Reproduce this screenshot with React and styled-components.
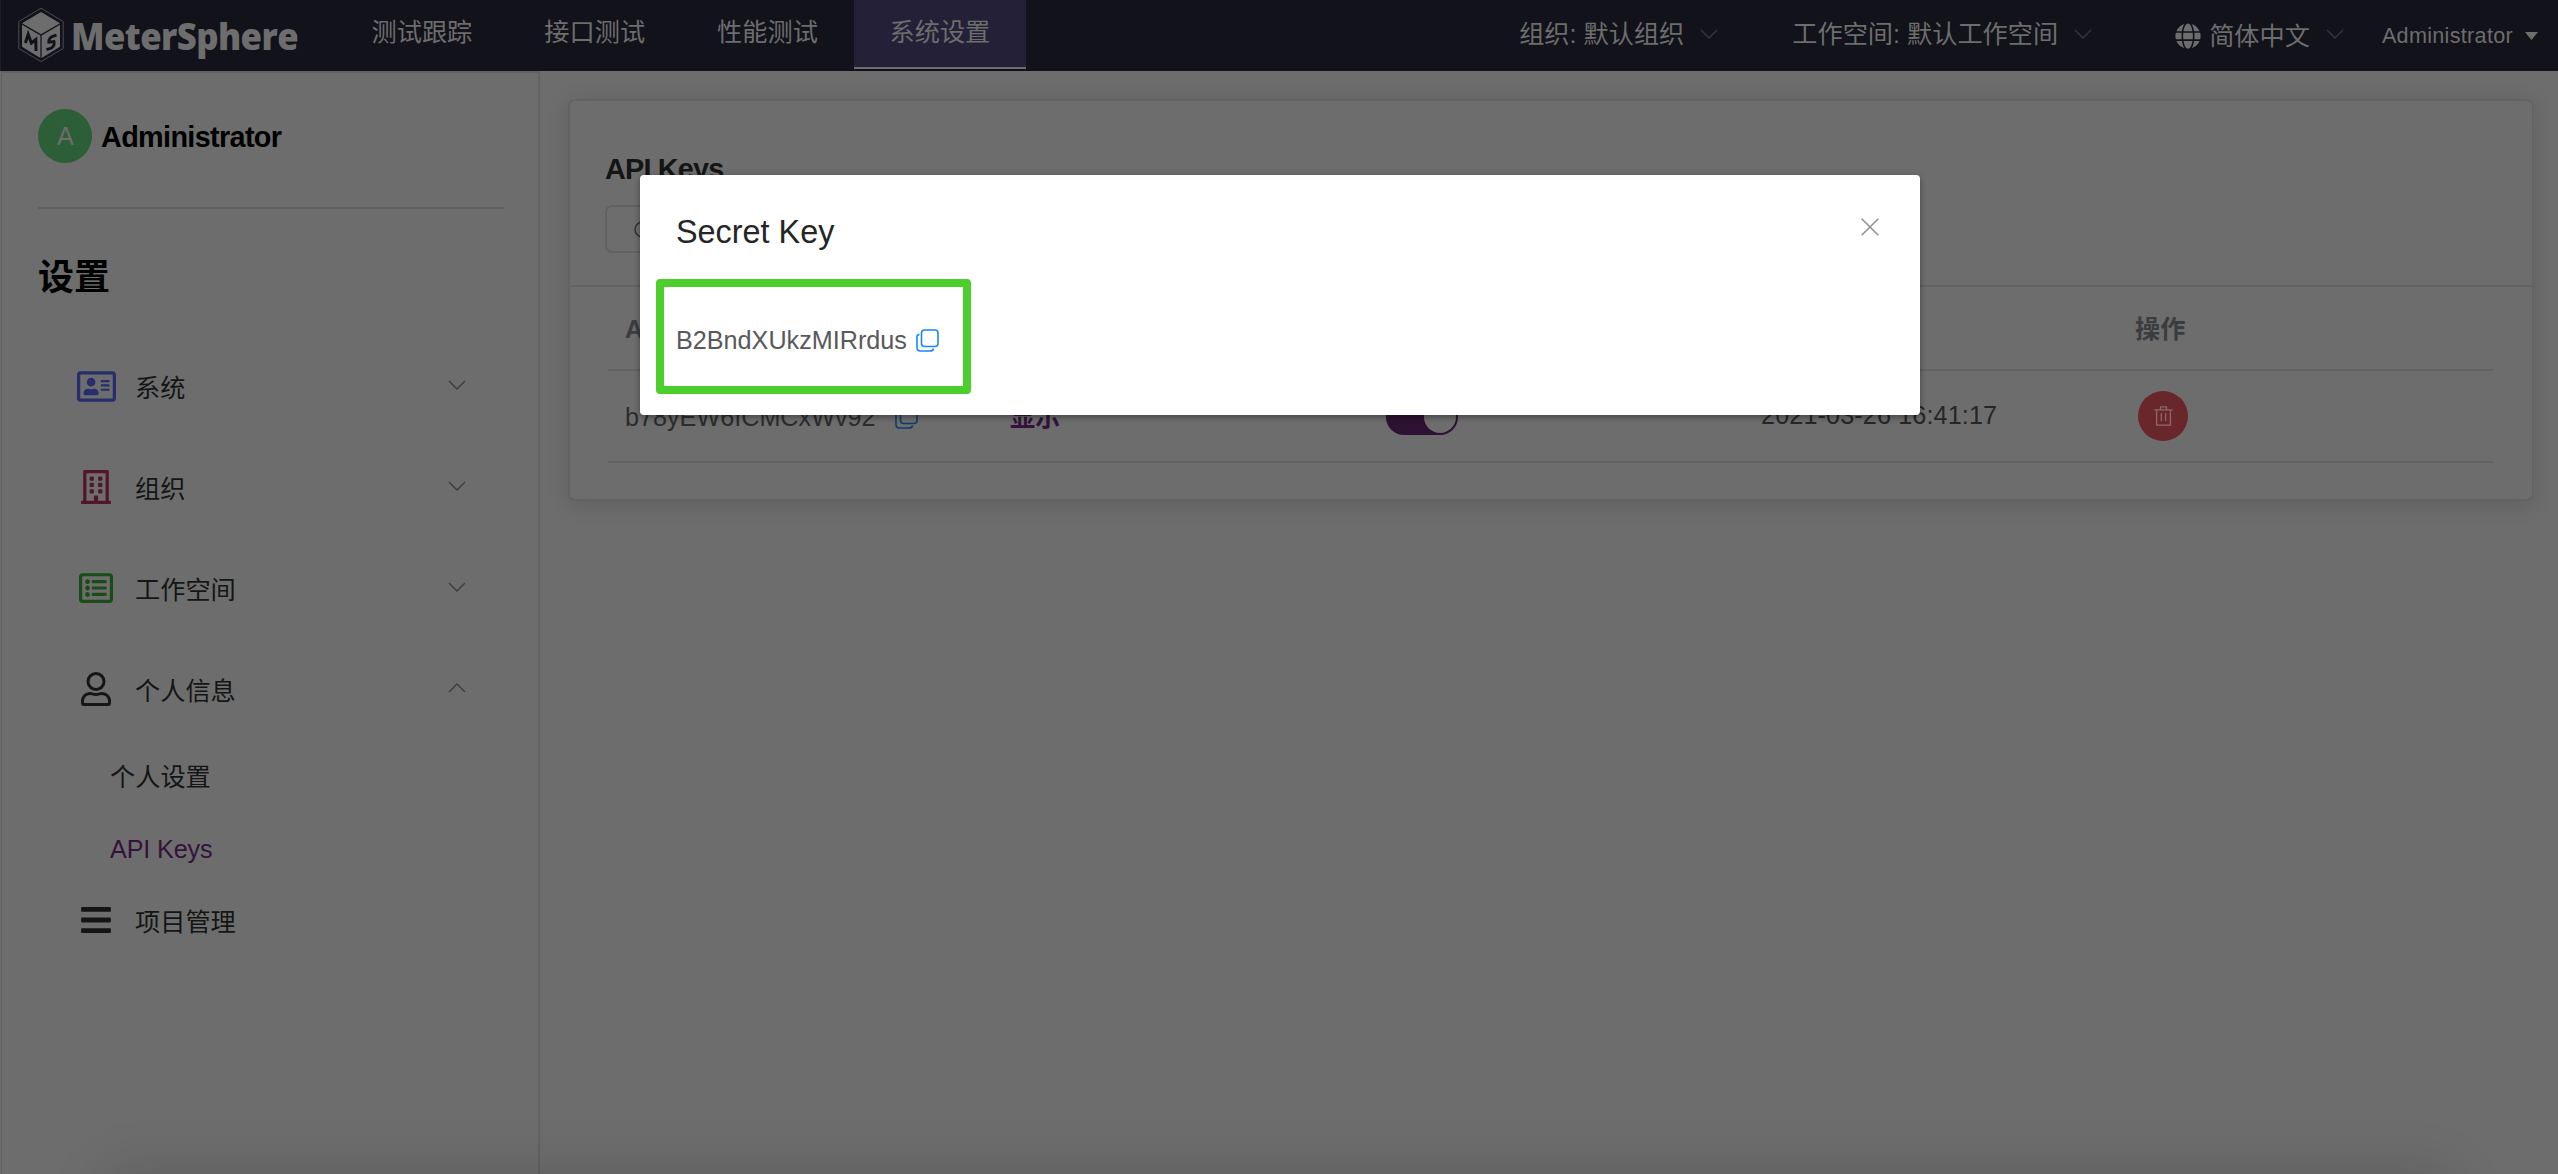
import React from "react";
import styled, { createGlobalStyle } from "styled-components";
import { FaRegAddressCard, FaRegBuilding, FaRegListAlt, FaBars, FaGlobe } from "react-icons/fa";

const Global = createGlobalStyle`
  * { box-sizing: border-box; }
  html, body { margin: 0; padding: 0; }
  body {
    width: 2558px; height: 1174px; overflow: hidden;
    background: #6d6d6d; color: #141515;
    font-family: "Liberation Sans", "Noto Sans CJK SC", sans-serif;
    font-size: 25.2px; line-height: 36px;
  }
`;

const Page = styled.div`
  position: relative; display: flex; flex-direction: column;
  width: 2558px; height: 1174px; overflow: hidden;
  &::after {
    content: ""; position: absolute; left: 110px; right: 110px; top: 1178px; height: 60px;
    box-shadow: 0 0 60px rgba(0, 0, 0, 0.18);
  }
`;
const Header = styled.header`
  display: flex; flex: none; height: 71px; background: #12121b; color: #6d6d6d;
  border-left: 1px solid #1f1f29;
`;
const Brand = styled.div`
  display: flex; width: 334.5px; flex: none; padding: 7px 0 0 16px; gap: 6px;
`;
const BrandName = styled.div`
  font: 800 36.5px/58px "Open Sans", "Noto Sans", sans-serif;
  letter-spacing: -0.6px; white-space: nowrap;
  transform: scaleX(0.95); transform-origin: left center;
`;
const Tab = styled.div`
  width: ${(p) => (p.$active ? 172 : 172.8)}px; height: 69px; flex: none; text-align: center; padding-top: 14px;
  background: ${(p) => (p.$active ? "#232038" : "transparent")};
  border-bottom: 2px solid ${(p) => (p.$active ? "#6d6d6d" : "transparent")};
`;
const HeaderRight = styled.div`
  display: flex; margin-left: auto; padding-right: 20px;
`;
const Picker = styled.div`
  display: flex; white-space: nowrap; padding-top: ${(p) => p.$top}px; margin-right: ${(p) => p.$after}px;
  svg.globe { width: 26px; height: 26px; margin: 5px 8px 0 0; }
  svg.chev { margin: ${(p) => 29 - p.$top}px 0 0 16px; }
`;
const Account = styled.div`
  display: flex; padding-top: 18px; font-size: 21.6px; letter-spacing: 0.3px;
  svg { margin: 14px 0 0 12px; }
`;

const Body = styled.div` display: flex; flex: 1; min-height: 0; `;
const Sidebar = styled.aside`
  width: 539px; flex: none; margin-left: 1px; padding: 36px 34px 0 36px;
  border: 2px solid #626262; border-left-width: 1px; border-bottom: 0;
`;
const User = styled.div`
  display: flex; align-items: center; height: 54px; gap: 9px; color: #000;
  font-weight: 700; font-size: 28.8px; letter-spacing: -0.65px;
`;
const UserName = styled.span` padding-top: 2px; `;
const Avatar = styled.div`
  width: 54px; height: 54px; border-radius: 50%; background: #2c5f38; color: #6d6d6d;
  display: flex; align-items: center; justify-content: center; font-weight: 400; font-size: 25.2px;
`;
const Rule = styled.div` height: 2px; width: 466px; background: #606066; margin-top: 44px; `;
const SideTitle = styled.div`
  margin-top: 42px; height: 54px; line-height: 54px; font-size: 36px; font-weight: 700; color: #000;
`;
const Menu = styled.nav` margin-top: 33px; `;
const Item = styled.div`
  display: flex; align-items: center; height: ${(p) => p.$h || 100.8}px; padding-left: 36px;
`;
const IconBox = styled.span`
  display: flex; align-items: center; justify-content: center;
  width: 44px; height: 40px; margin: 0 17px 4px 0; color: ${(p) => p.$color};
`;
const ItemText = styled.span` flex: 1; `;
const Arrow = styled.span` display: flex; margin: 0 38px 6px 0; `;
const SubItem = styled.div`
  height: 72px; line-height: 72px; padding-left: 72px; color: ${(p) => (p.$active ? "#34123c" : "#141515")};
  letter-spacing: ${(p) => (p.$active ? -0.15 : 0)}px;
`;

const Main = styled.main` flex: 1; padding: 28px 24px 0 28px; `;
const Card = styled.section`
  height: 402px; border: 2px solid #626267; border-radius: 7px;
  box-shadow: 0 3.6px 21.6px rgba(0, 0, 0, 0.12);
`;
const CardHead = styled.div`
  height: 186px; padding: 50px 0 0 35px; border-bottom: 2px solid #626267;
`;
const CardTitle = styled.div`
  height: 54px; font-size: 28.8px; line-height: 37px; font-weight: 700; letter-spacing: -0.8px;
`;
const Search = styled.div`
  width: 360px; height: 48px; border: 2px solid #606065; border-radius: 7px; padding: 14px 0 0 27px; color: #303133;
  svg { display: block; }
`;
const Table = styled.div` margin: 0 39px 0 38px; `;
const Row = styled.div`
  display: grid; grid-template-columns: 385px 376px 375px 376px 1fr;
  height: ${(p) => p.$h}px; border-bottom: 2px solid #626267; align-items: center;
  font-weight: ${(p) => (p.$head ? 700 : 400)}; color: ${(p) => (p.$head ? "#3b3c3f" : "#2b2c2e")};
`;
const Cell = styled.div`
  display: flex; align-items: center; padding: 2px ${(p) => (p.$last ? 15 : 17)}px 0; white-space: nowrap;
`;
const Reveal = styled.span` color: #34123c; font-weight: 700; `;
const Time = styled.span` letter-spacing: 0.12px; padding-bottom: 4px; color: #252627; `;
const Toggle = styled.span`
  display: flex; justify-content: flex-end; width: 72px; height: 36px; border-radius: 18px;
  background: #2e1233; padding: 2px;
`;
const Knob = styled.span` width: 32px; height: 32px; border-radius: 50%; background: #6d6d6d; `;
const Delete = styled.span`
  display: flex; align-items: center; justify-content: center; width: 50px; height: 50px; margin: 0 0 2px 3px;
  border-radius: 50%; background: #69272b; color: #8d686a;
`;

const Dialog = styled.div`
  position: absolute; left: 640px; top: 175px; width: 1280px; height: 240px; background: #fff;
  border-radius: 4px; box-shadow: 0 2px 6px rgba(0, 0, 0, 0.4); padding: 36px 41px 0 36px;
`;
const DialogHead = styled.div`
  display: flex; justify-content: space-between; height: 111px; font-size: 32.4px; line-height: 43px; color: #242526;
  svg { margin-top: 7px; }
`;
const Secret = styled.div`
  display: flex; align-items: center; gap: 9px; color: #58595c; height: 36px;
`;
const Highlight = styled.div`
  position: absolute; left: 16px; top: 104px; width: 315px; height: 115px;
  border: 8px solid #4ccf2d; border-radius: 4px;
`;

const Chevron = ({ up, color = "#36373b", ...rest }) => (
  <svg width="18" height="10" viewBox="0 0 18 10" fill="none" stroke={color} strokeWidth="1.4" {...rest}>
    <path d={up ? "M1 9L9 1L17 9" : "M1 1L9 9L17 1"} />
  </svg>
);
const CopyGlyph = styled.svg` margin-left: ${(p) => p.$gap || 0}px; `;
const CopyIcon = ({ color, gap }) => (
  <CopyGlyph $gap={gap} width="23" height="23" viewBox="0 0 23 23" fill="none" stroke={color} strokeWidth="1.6">
    <rect x="5.5" y="1" width="16.5" height="16.5" rx="3" />
    <path d="M3.4 5.4C1.7 5.7 1 6.6 1 8V18.5C1 20.8 2.2 22 4.5 22H14C16 22 17.3 21.2 17.6 19.5" />
  </CopyGlyph>
);
const Logo = () => (
  <svg width="48" height="56" viewBox="0 0 48 56" fill="none">
    <path d="M24 1.2L46.2 14.5V41.5L24 54.6L1.8 41.5V14.5Z" stroke="#4b4b50" strokeWidth="1" />
    <path d="M24 5L43 16.3L24 27.3L5 16.3Z" fill="#6d6d6d" />
    <path d="M5 17.8L23.4 28.5V51L5 39.8Z" fill="#6d6d6d" />
    <path d="M43 17.8L24.6 28.5V51L43 39.8Z" fill="#6d6d6d" />
    <path d="M8.4 36L11.2 27.4L14.4 36L18.8 32.6L19 44" stroke="#12121b" strokeWidth="3" />
    <path d="M39.5 28.2L35 29.6Q31.4 31.6 31.8 35.2L37 34.6Q38 38.4 34.4 41L29.4 42.6" stroke="#12121b" strokeWidth="2.8" />
  </svg>
);
const UserIcon = () => (
  <svg width="30" height="34" viewBox="0 0 30 34" fill="none" stroke="currentColor" strokeWidth="3">
    <circle cx="15" cy="9.5" r="8" />
    <path d="M9 21.5C11 21.5 12 22.5 15 22.5S19 21.5 21 21.5C25.5 21.5 28.5 25 28.5 29V31Q28.5 32.5 27 32.5H3Q1.5 32.5 1.5 31V29C1.5 25 4.5 21.5 9 21.5Z" />
  </svg>
);
const TrashIcon = () => (
  <svg width="19" height="20" viewBox="0 0 19 20" fill="none" stroke="currentColor" strokeWidth="1.3">
    <path d="M.3 3.8H18.7M2.6 3.8V19.2H16.4V3.8M6.5 3.6V.9H12.5V3.6M7.3 7V15M11.7 7V15" />
  </svg>
);

const tabs = ["测试跟踪", "接口测试", "性能测试", "系统设置"];
const groups = [
  { label: "系统", color: "#262e6e", icon: <FaRegAddressCard size={39} /> },
  { label: "组织", color: "#53152a", icon: <FaRegBuilding size={34} /> },
  { label: "工作空间", color: "#1a4c1a", icon: <FaRegListAlt size={34} /> },
  { label: "个人信息", color: "#141515", icon: <UserIcon />, open: true },
];

export default function App() {
  return (
    <Page>
      <Global />
      <Header>
        <Brand><Logo /><BrandName>MeterSphere</BrandName></Brand>
        {tabs.map((t) => <Tab key={t} $active={t === "系统设置"}>{t}</Tab>)}
        <HeaderRight>
          <Picker $top={16} $after={74}>组织: 默认组织<Chevron className="chev" /></Picker>
          <Picker $top={16} $after={83}>工作空间: 默认工作空间<Chevron className="chev" /></Picker>
          <Picker $top={18} $after={38}><FaGlobe className="globe" />简体中文<Chevron className="chev" /></Picker>
          <Account>Administrator
            <svg width="13" height="8" viewBox="0 0 13 8"><path d="M0 0H13L6.5 8Z" fill="#6d6d6d" /></svg>
          </Account>
        </HeaderRight>
      </Header>
      <Body>
        <Sidebar>
          <User><Avatar>A</Avatar><UserName>Administrator</UserName></User>
          <Rule />
          <SideTitle>设置</SideTitle>
          <Menu>
            {groups.map((g) => (
              <Item key={g.label}>
                <IconBox $color={g.color}>{g.icon}</IconBox>
                <ItemText>{g.label}</ItemText>
                <Arrow><Chevron up={g.open} color="#3c3d41" /></Arrow>
              </Item>
            ))}
            <SubItem>个人设置</SubItem>
            <SubItem $active>API Keys</SubItem>
            <Item $h={74}>
              <IconBox $color="#141515"><FaBars size={34} /></IconBox>
              <ItemText>项目管理</ItemText>
            </Item>
          </Menu>
        </Sidebar>
        <Main>
          <Card>
            <CardHead>
              <CardTitle>API Keys</CardTitle>
              <Search>
                <svg width="20" height="20" viewBox="0 0 20 20" fill="none" stroke="currentColor" strokeWidth="1.5">
                  <circle cx="8.5" cy="8.5" r="7.5" /><path d="M14 14L19 19" />
                </svg>
              </Search>
            </CardHead>
            <Table>
              <Row $h={84} $head>
                <Cell>Access Key</Cell><Cell>Secret Key</Cell><Cell>状态</Cell><Cell>创建时间</Cell><Cell $last>操作</Cell>
              </Row>
              <Row $h={92}>
                <Cell>b78yEW6ICMCxWv92<CopyIcon color="#113b6c" gap={19} /></Cell>
                <Cell><Reveal>显示</Reveal></Cell>
                <Cell><Toggle><Knob /></Toggle></Cell>
                <Cell><Time>2021-03-26 16:41:17</Time></Cell>
                <Cell $last><Delete><TrashIcon /></Delete></Cell>
              </Row>
            </Table>
          </Card>
        </Main>
      </Body>
      <Dialog>
        <DialogHead>Secret Key
          <svg width="18" height="18" viewBox="0 0 18 18" stroke="#8b8e93" strokeWidth="1.5"><path d="M.7 .7L17.3 17.3M17.3 .7L.7 17.3" /></svg>
        </DialogHead>
        <Secret>B2BndXUkzMIRrdus<CopyIcon color="#1c84ff" /></Secret>
        <Highlight />
      </Dialog>
    </Page>
  );
}
